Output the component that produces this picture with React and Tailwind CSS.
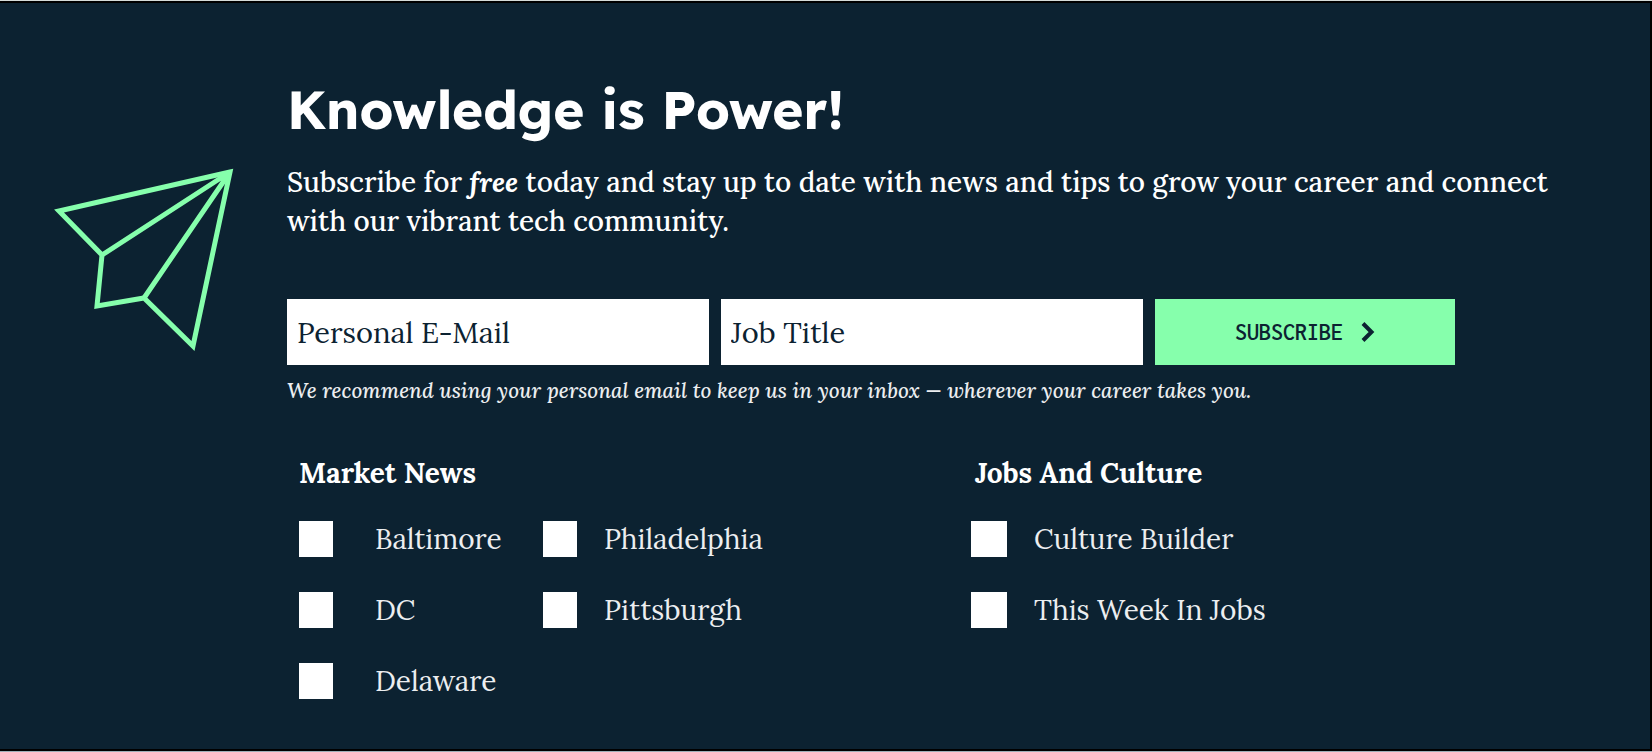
import React from "react";

function PaperPlane() {
  return (
    <svg viewBox="0 0 184 188" className="h-[188px] w-[184px] shrink-0" fill="none" stroke="#86ffac" strokeWidth="5" aria-hidden="true">
      <path d="M177 4 L6 43 L49 87 L44 138 L91 130 L140 178 Z" />
      <path d="M49 87 L177 4 L91 130" />
    </svg>
  );
}

function Option({ id, label, box, gap }) {
  return (
    <div className={"flex items-center " + gap}>
      <input id={id} type="checkbox" className={"h-9 shrink-0 appearance-none bg-white checked:bg-[#86ffac] " + box} />
      <label htmlFor={id} className="text-[28px] leading-9 text-[#eceef0]">{label}</label>
    </div>
  );
}

export default function App() {
  return (
    <main className="flex min-h-screen flex-col border-y border-t-[#d5dbd8] border-b-[#9fb0b8] bg-[#0c2231] font-['Lora','Liberation_Serif',serif] text-white">
      <div className="flex flex-1 items-start border-y-2 border-r-2 border-black pb-10 pl-[53px]">
        <div className="pt-[165px]"><PaperPlane /></div>
        <div className="min-w-0 flex-1 pl-[50px] pr-14 pt-[76px]">
          <h1 className="font-['Lexend','Inter',sans-serif] text-[53px] font-bold leading-[60px]">Knowledge is Power!</h1>
          <p className="mt-6 text-[28px] font-medium leading-[39px]">
            Subscribe for <em className="font-bold">free</em> today and stay up to date with news and tips to grow your career and connect with our vibrant tech community.
          </p>
          <form className="mt-[58px]">
            <div className="mr-[139px] flex gap-3">
              <input aria-label="Personal E-Mail" placeholder="Personal E-Mail" type="email" className="h-[66px] min-w-0 flex-1 bg-white px-[10px] text-[29px] text-[#0c2231] placeholder:text-[#0c2231]" />
              <input aria-label="Job Title" placeholder="Job Title" type="text" className="h-[66px] min-w-0 flex-1 bg-white px-[10px] text-[29px] text-[#0c2231] placeholder:text-[#0c2231]" />
              <button type="submit" className="flex h-[66px] w-[300px] items-center justify-center gap-[18px] bg-[#86ffac] font-['Inconsolata','Roboto_Mono','DejaVu_Sans_Mono',monospace] text-2xl font-semibold text-[#0c2231]">
                SUBSCRIBE
                <svg viewBox="0 0 14 20" className="h-5 w-[14px]" fill="none" stroke="currentColor" strokeWidth="4" aria-hidden="true">
                  <path d="M2 1.5 L10.5 10 L2 18.5" />
                </svg>
              </button>
            </div>
            <p className="mt-[10px] text-[21px] font-medium italic leading-8 text-[#eceef0]">We recommend using your personal email to keep us in your inbox — wherever your career takes you.</p>
            <div className="mt-[46px] flex pl-3">
              <fieldset className="w-[672px]">
                <legend className="text-[28px] font-bold leading-10">Market News</legend>
                <div className="mt-7 grid grid-cols-[244px_1fr] gap-y-[35px]">
                  <Option id="baltimore" label="Baltimore" box="w-[34px]" gap="gap-[42px]" />
                  <Option id="philadelphia" label="Philadelphia" box="w-[34px]" gap="gap-[27px]" />
                  <Option id="dc" label="DC" box="w-[34px]" gap="gap-[42px]" />
                  <Option id="pittsburgh" label="Pittsburgh" box="w-[34px]" gap="gap-[27px]" />
                  <Option id="delaware" label="Delaware" box="w-[34px]" gap="gap-[42px]" />
                </div>
              </fieldset>
              <fieldset>
                <legend className="pl-1 text-[28px] font-bold leading-10">Jobs And Culture</legend>
                <div className="mt-7 grid gap-y-[35px]">
                  <Option id="culture-builder" label="Culture Builder" box="w-9" gap="gap-[27px]" />
                  <Option id="week-in-jobs" label="This Week In Jobs" box="w-9" gap="gap-[27px]" />
                </div>
              </fieldset>
            </div>
          </form>
        </div>
      </div>
    </main>
  );
}
